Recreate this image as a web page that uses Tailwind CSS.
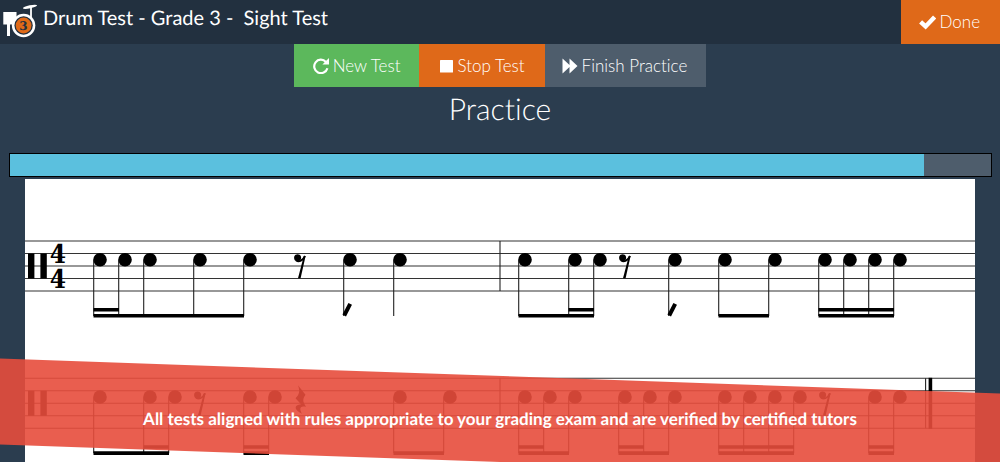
<!DOCTYPE html>
<html lang="en">
<head>
  <meta charset="UTF-8">
  <meta name="viewport" content="width=device-width, initial-scale=1.0">
  <title>Drum Test - Grade 3 - Sight Test</title>
  <!-- Tailwind CSS -->
  <script src="https://cdn.jsdelivr.net/npm/@tailwindcss/browser@4"></script>
</head>
<body class="relative min-h-screen overflow-hidden bg-[#2b3d4f] font-[Lato,sans-serif] text-white [text-rendering:geometricPrecision]">
  <!-- Header -->
  <header class="flex h-11 items-stretch justify-between bg-[#22303f]">
    <div class="flex items-start">
      <svg class="h-11 w-[43px]" viewBox="0 0 43 44" role="img" aria-label="Drum Test logo">
        <path d="M3.3 12H16.5V19L12 24.5H10V36H7V24.5H3.3Z" fill="#fff"/>
        <path d="M31 7V18" stroke="#fff" stroke-width="1.8"/>
        <ellipse cx="30" cy="6.8" rx="7.2" ry="1.5" transform="rotate(-12 30 6.8)" fill="#fff"/>
        <circle cx="23.6" cy="25.5" r="11.7" fill="#fff"/>
        <circle cx="23.6" cy="25.5" r="9.2" fill="#22303f"/>
        <circle cx="23.6" cy="25.5" r="7.9" fill="#e06a17"/>
        <text x="23.5" y="30" text-anchor="middle" font-family="DejaVu Serif, serif" font-weight="bold" font-size="12" fill="#22303f">3</text>
      </svg>
      <h1 class="pt-1 text-[20px] leading-7 whitespace-pre">Drum Test - Grade 3 -  Sight Test</h1>
    </div>
    <button class="flex items-center gap-1 bg-[#df6919] pr-5 pl-[18px] text-[17px] font-light">
      <svg class="h-4 w-[17px]" viewBox="0 0 17 16" fill="none" stroke="#fff" stroke-width="4.4"><path d="M1.6 7.8L6.6 12.4L15.6 3"/></svg>
      Done
    </button>
  </header>

  <!-- Test controls -->
  <div class="flex justify-center text-[17px] font-light [font-variant-ligatures:none]">
    <button class="flex h-[43px] items-center gap-1 bg-[#5cb85c] px-[19px]">
      <svg class="size-4" viewBox="0 0 16 16"><path d="M12.9 3.9A6.7 6.7 0 1 0 14.4 10.2" fill="none" stroke="#fff" stroke-width="2.2"/><path d="M16 0V6.6H9.4Z" fill="#fff"/></svg>
      New Test
    </button>
    <button class="flex h-[43px] items-center gap-1 bg-[#df6919] px-5">
      <svg class="size-[14px]" viewBox="0 0 14 14"><rect x="1" y="1" width="13" height="12.5" rx="0.5" fill="#fff"/></svg>
      Stop Test
    </button>
    <button class="flex h-[43px] items-center gap-1 bg-[#4e5d6c] pr-[19px] pl-[17px]">
      <svg class="h-4 w-4" viewBox="0 0 16 16"><path d="M0.5 0.5L7.5 7V0.5L15.5 8L7.5 15.5V9L0.5 15.5Z" fill="#fff"/></svg>
      Finish Practice
    </button>
  </div>

  <main>
    <h2 class="pt-1 text-center text-[30px] leading-9 font-light [font-variant-ligatures:none]">Practice</h2>

    <div class="mr-2 ml-[9px] mt-[26px] h-6 border border-black bg-[#4e5d6c]" role="progressbar" aria-label="Practice time" aria-valuenow="93" aria-valuemin="0" aria-valuemax="100">
      <div class="h-full bg-[#5bc0de]" style="width: 93.2%"></div>
    </div>

    <!-- Score -->
    <svg class="mx-auto mt-[2px] w-[95%] bg-white" viewBox="25 179 950 283" role="img" aria-label="Drum score in 4/4">
      <defs>
        <g id="note">
          <circle cy="259.7" r="6.8"/>
          <path d="M-6.3 260V316" stroke="#222" stroke-width="1.1"/>
        </g>
        <path id="flag" d="M-5.8 315.5L0.2 303.8" stroke="#000" stroke-width="4"/>
        <g id="rest">
          <circle cx="-2.4" cy="257.8" r="3.5"/>
          <path d="M-4 260.2C-1.5 262.4 2.5 261.4 5 256" fill="none" stroke="#000" stroke-width="1.8"/>
          <path d="M3.8 256H5.6L0.6 278.2H-2Z"/>
        </g>
        <g id="staff">
          <path d="M25 241H975M25 253.5H975M25 266H975M25 278.5H975M25 291H975" stroke="#333" stroke-width="1.1"/>
          <path d="M28 253.5H34.4V278.5H28ZM40.4 253.5H46.8V278.5H40.4Z"/>
          <path d="M500 241V291" stroke="#222" stroke-width="1.1"/>
        </g>
      </defs>

      <!-- Bars 1 and 2 -->
      <use href="#staff"/>
      <g font-family="DejaVu Serif Condensed, DejaVu Serif, serif" font-weight="bold" font-size="26" text-anchor="middle">
        <text x="58" y="262.5">4</text>
        <text x="58" y="288">4</text>
      </g>
      <use href="#note" x="100"/>
      <use href="#note" x="125"/>
      <use href="#note" x="150"/>
      <use href="#note" x="200"/>
      <use href="#note" x="250"/>
      <use href="#rest" x="300"/>
      <use href="#note" x="350"/>
      <use href="#flag" x="350"/>
      <use href="#note" x="400"/>
      <use href="#note" x="525"/>
      <use href="#note" x="575"/>
      <use href="#note" x="600"/>
      <use href="#rest" x="625"/>
      <use href="#note" x="675"/>
      <use href="#flag" x="675"/>
      <use href="#note" x="725"/>
      <use href="#note" x="775"/>
      <use href="#note" x="825"/>
      <use href="#note" x="850"/>
      <use href="#note" x="875"/>
      <use href="#note" x="900"/>
      <path d="M93.5 315.8H244M93.5 309.7H119M518.5 315.8H594M568.5 309.7H594M718.5 315.8H769M818.5 315.8H894M818.5 309.7H894" stroke="#000" stroke-width="3.6"/>

      <!-- Bars 3 and 4 -->
      <g transform="translate(0 137.3)">
        <use href="#staff"/>
        <use href="#note" x="100"/>
        <use href="#note" x="150"/>
        <use href="#note" x="175"/>
        <use href="#rest" x="200"/>
        <use href="#note" x="250"/>
        <use href="#note" x="275"/>
        <path d="M298 248L305.5 257.5C302.5 262 302.5 264 306 269.5C300 268 299 271 302 276.5C294 273 293.5 267.5 301 267L295.5 261C299.5 257 300 254 298 248Z"/>
        <use href="#note" x="400"/>
        <use href="#note" x="450"/>
        <use href="#note" x="525"/>
        <use href="#note" x="550"/>
        <use href="#note" x="575"/>
        <use href="#note" x="625"/>
        <use href="#note" x="650"/>
        <use href="#note" x="675"/>
        <use href="#note" x="725"/>
        <use href="#note" x="750"/>
        <use href="#note" x="775"/>
        <use href="#note" x="800"/>
        <use href="#rest" x="825"/>
        <use href="#note" x="875"/>
        <use href="#note" x="900"/>
        <path d="M93.5 315.8H169M143.5 309.7H169M243.5 315.8H269M243.5 309.7H269M393.5 315.8H444M518.5 315.8H569M518.5 309.7H544M618.5 315.8H669M618.5 309.7H644M718.5 315.8H794M718.5 309.7H794M868.5 315.8H894M868.5 309.7H894" stroke="#000" stroke-width="3.6"/>
        <path d="M925.6 241V291" stroke="#222" stroke-width="1.1"/>
        <path d="M930.4 240.5V291.5" stroke="#000" stroke-width="3.6"/>
      </g>
    </svg>
  </main>

  <!-- Slanted banner -->
  <div class="absolute inset-x-0 bottom-0 flex h-[86px] items-center justify-center">
    <div class="absolute inset-0 skew-y-2 bg-[#e74c3c]/90"></div>
    <p class="relative text-center text-[17px] leading-6 font-bold">All tests aligned with rules appropriate to your grading exam and are verified by certified tutors</p>
  </div>
</body>
</html>
